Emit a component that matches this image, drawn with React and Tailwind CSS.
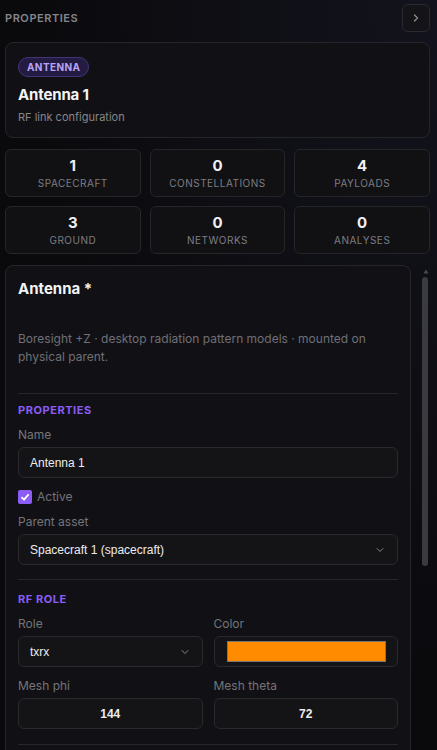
import React from 'react';
import { ChevronRight, ChevronDown } from 'lucide-react';

const stats = [
  { n: 1, label: 'Spacecraft' },
  { n: 0, label: 'Constellations' },
  { n: 4, label: 'Payloads' },
  { n: 3, label: 'Ground' },
  { n: 0, label: 'Networks' },
  { n: 0, label: 'Analyses' },
];

const Label = ({ children, className = '' }) => (
  <div className={`text-[12px] leading-[18px] text-[#74747a] mb-[3px] ${className}`}>{children}</div>
);

// form controls keep the browser's own font (Arial-like)
const Box = ({ children, className = '' }) => (
  <div className={`h-[31px] rounded-[6px] border border-[#29292e] bg-[#141417] flex items-center px-[11px] text-[12px] font-['Liberation_Sans',Arial,sans-serif] text-[#ececef] ${className}`}>
    {children}
  </div>
);

const Section = ({ children, className = '' }) => (
  <div className={`text-[11px] font-bold tracking-[0.05em] uppercase text-[#8b5cf6] leading-[16px] ${className}`}>{children}</div>
);

const Divider = ({ className = '' }) => <div className={`border-t border-[#26262b] ${className}`} />;

export default function App() {
  return (
    <div className="h-[750px] overflow-hidden bg-[radial-gradient(ellipse_at_top_right,#13131d_0%,#0a0a0d_65%)] text-white font-['Inter',sans-serif] flex flex-col pl-[5px] pr-[7px]">
      {/* header */}
      <div className="h-[42px] shrink-0 pt-[4px] flex items-start justify-between">
        <span className="mt-[6px] text-[11px] leading-[16px] font-semibold tracking-[0.05em] text-[#85858b]">PROPERTIES</span>
        <button className="w-[28px] h-[28px] rounded-[6px] border border-[#2a2a30] bg-[#141418] flex items-center justify-center text-[#8e8e94]">
          <ChevronRight size={12} strokeWidth={2.5} />
        </button>
      </div>

      {/* asset card */}
      <div className="shrink-0 rounded-[8px] border border-[#25252a] bg-[#111115] px-[12px] pt-[14px] pb-[12px] flex flex-col">
        <span className="w-fit flex items-center h-[20px] px-[8px] rounded-full border border-[#44357a] bg-[#241b43] text-[10px] font-bold tracking-[0.04em] text-[#b8a4f4]">ANTENNA</span>
        <div className="mt-[7px] text-[15px] font-bold leading-[22px] tracking-[-0.01em] text-[#f4f4f5]">Antenna 1</div>
        <div className="mt-[4px] text-[11px] leading-[15px] text-[#85858b]">RF link configuration</div>
      </div>

      {/* stats */}
      <div className="shrink-0 mt-[11px] grid grid-cols-3 gap-[9px]">
        {stats.map((s) => (
          <div key={s.label} className="h-[48px] rounded-[6px] border border-[#25252a] bg-[#111114] flex flex-col items-center justify-center">
            <div className="text-[15px] font-bold leading-[18px] text-[#f0f0f2]">{s.n}</div>
            <div className="text-[10px] leading-[14px] mt-[1px] tracking-[0.05em] uppercase text-[#7d7d83]">{s.label}</div>
          </div>
        ))}
      </div>

      {/* scroll area */}
      <div className="mt-[11px] flex-1 min-h-0 flex">
        <div className="flex-1 min-w-0 overflow-hidden">
          <div className="rounded-[8px] border border-[#25252a] bg-[#111115] px-[12px] pt-[12px] pb-[120px]">
            <div className="text-[15px] font-bold leading-[22px] text-[#f4f4f5]">Antenna *</div>
            <p className="mt-[30px] text-[12px] leading-[18px] text-[#6f6f75]">
              Boresight +Z · desktop radiation pattern models · mounted on physical parent.
            </p>
            <Divider className="mt-[27px]" />

            <Section className="mt-[8px]">Properties</Section>
            <Label className="mt-[8px]">Name</Label>
            <Box>Antenna 1</Box>
            <label className="mt-[10px] h-[18px] flex items-center gap-[5px]">
              <span className="w-[14px] h-[14px] rounded-[2px] bg-[#8b5cf6] flex items-center justify-center">
                <svg width="10" height="10" viewBox="0 0 10 10"><path d="M1.5 5.2 L4 7.6 L8.6 2.4" fill="none" stroke="#fff" strokeWidth="1.8" /></svg>
              </span>
              <span className="text-[12px] leading-[18px] text-[#74747a]">Active</span>
            </label>
            <Label className="mt-[7px]">Parent asset</Label>
            <Box className="justify-between">
              <span>Spacecraft 1 (spacecraft)</span>
              <ChevronDown size={12} className="text-[#86868c]" />
            </Box>
            <Divider className="mt-[14px]" />

            <Section className="mt-[11px]">RF Role</Section>
            <div className="mt-[8px] grid grid-cols-2 gap-x-[11px] gap-y-[10px]">
              <div>
                <Label>Role</Label>
                <Box className="justify-between">
                  <span>txrx</span>
                  <ChevronDown size={12} className="text-[#86868c]" />
                </Box>
              </div>
              <div>
                <Label>Color</Label>
                <Box className="pl-[12px] pr-[11px]">
                  <div className="w-full h-[21px] bg-[#ff8c00] border border-[#76767a]" />
                </Box>
              </div>
              <div>
                <Label>Mesh phi</Label>
                <Box className="justify-center font-bold">144</Box>
              </div>
              <div>
                <Label>Mesh theta</Label>
                <Box className="justify-center font-bold">72</Box>
              </div>
            </div>
            <Divider className="mt-[15px]" />
          </div>
        </div>

        {/* scrollbar */}
        <div className="w-[19px] shrink-0 flex flex-col pl-[11px] pt-[4px]">
          <svg width="6" height="5" viewBox="0 0 6 5" className="ml-[1px]"><path d="M3 0.5 L5.5 4.5 L0.5 4.5 Z" fill="#4a4a50" /></svg>
          <div className="mt-[3px] w-[6px] h-[289px] rounded-full bg-[#3a3a3f]" />
        </div>
      </div>
    </div>
  );
}
